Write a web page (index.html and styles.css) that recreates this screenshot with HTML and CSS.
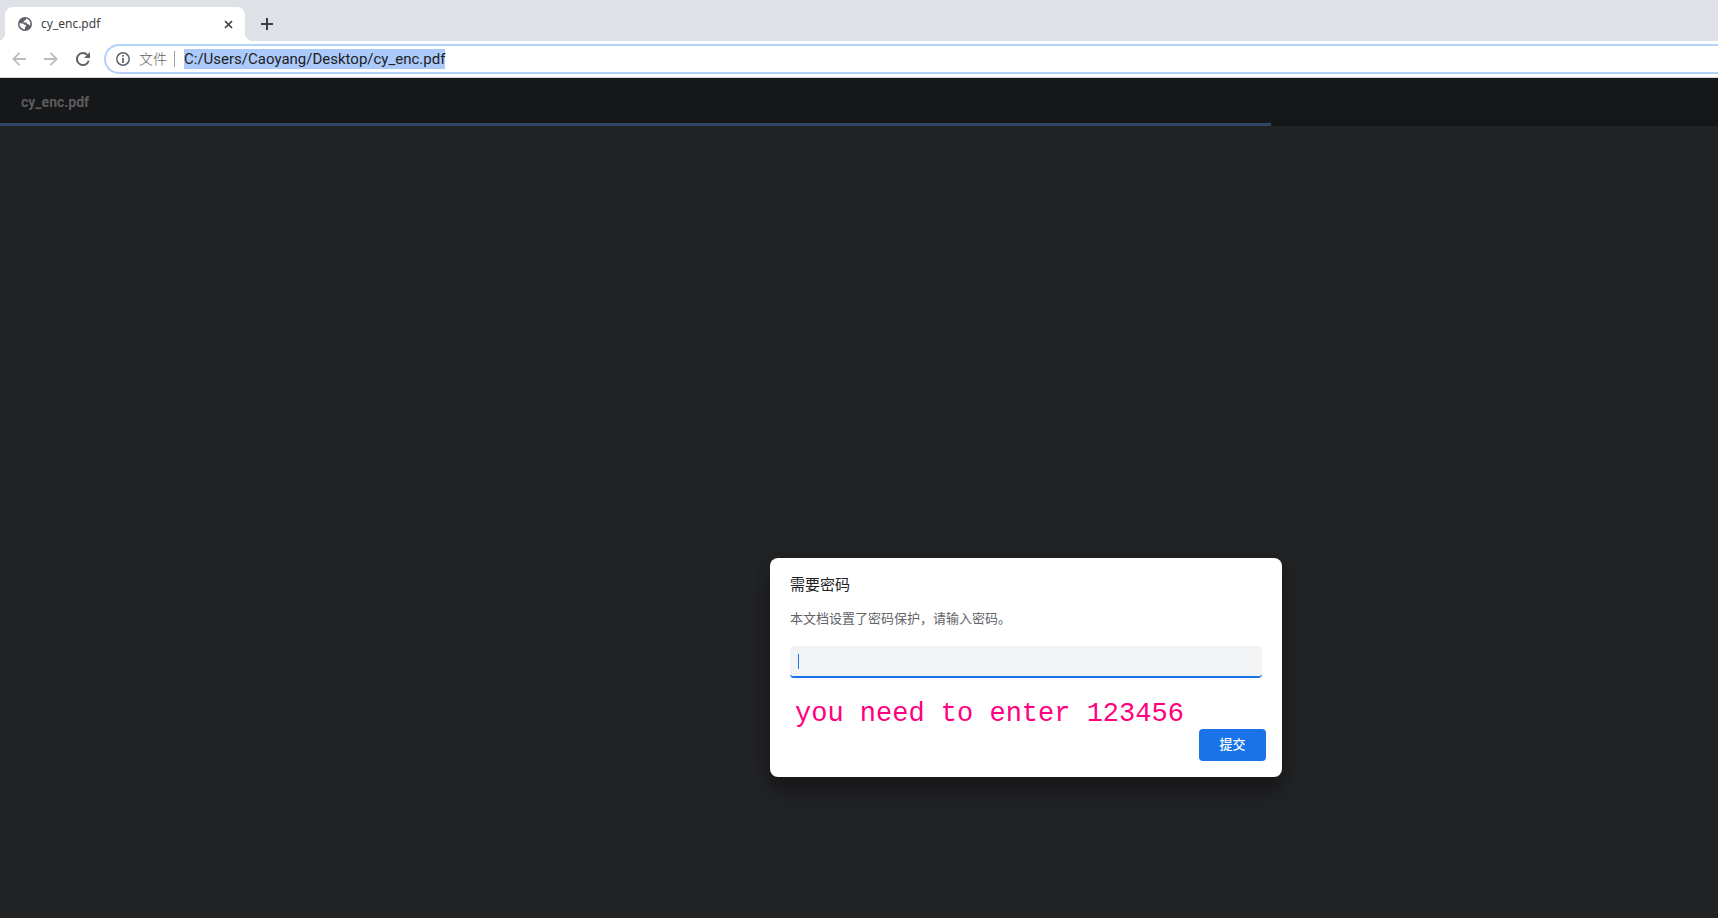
FILE: index.html
```html
<!DOCTYPE html>
<html lang="zh-CN">
<head>
<meta charset="utf-8">
<title>cy_enc.pdf</title>
<link rel="stylesheet" href="styles.css">
</head>
<body>
<div class="tab-strip">
  <div class="tab">
    <svg class="globe" viewBox="0 0 14 14" aria-hidden="true">
      <circle cx="7" cy="7" r="7" fill="#5f6368"/>
      <path d="M1.500 6.200 5 6.600q.9.2 1 1.100h1.300q1 .2.800 1.300-.2.700-1.100.7v2.700q-2.900-.1-4.600-2.300-1.200-1.700-.9-3.900z" fill="#fff"/>
      <path d="M8.200 1.600 7.900 2.500q-.2.700-1.100.7-.2 1.100-1.200 1.200v1h2.500q.9.200.9 1.200v.6h1.300q.8.100 1.100 1h.9q.4-2.300-.6-4.100-1.200-2-3.500-2.500z" fill="#fff"/>
    </svg>
    <span class="tab-title">cy_enc.pdf</span>
    <button class="icon-button" type="button" aria-label="关闭">
      <svg width="9" height="9" viewBox="0 0 9 9"><path d="M1 1l7 7M8 1 1 8" stroke="#3c4043" stroke-width="1.700" fill="none"/></svg>
    </button>
  </div>
  <button class="icon-button new-tab" type="button" aria-label="新标签页">
    <svg width="12" height="12" viewBox="0 0 12 12"><path d="M6 0v12M0 6h12" stroke="#3c4043" stroke-width="2" fill="none"/></svg>
  </button>
</div>
<div class="toolbar">
  <button class="icon-button" type="button" aria-label="后退">
    <svg width="14" height="14" viewBox="0 0 14 14"><path d="M14 7H1.500M7.500.8 1.300 7l6.200 6.200" stroke="#babcbe" stroke-width="1.800" fill="none"/></svg>
  </button>
  <button class="icon-button" type="button" aria-label="前进">
    <svg width="14" height="14" viewBox="0 0 14 14"><path d="M0 7h12.500M6.500.8 12.700 7l-6.200 6.200" stroke="#babcbe" stroke-width="1.800" fill="none"/></svg>
  </button>
  <button class="icon-button" type="button" aria-label="重新加载">
    <svg width="14" height="14" viewBox="0 0 14 14"><path d="M12.700 8.800A6 6 0 1 1 11.300 2.900" stroke="#5f6368" stroke-width="2" fill="none"/><path d="M14 0v6H8z" fill="#5f6368"/></svg>
  </button>
  <div class="omnibox">
    <svg width="14" height="14" viewBox="0 0 14 14" aria-hidden="true"><circle cx="7" cy="7" r="6.200" stroke="#5f6368" stroke-width="1.500" fill="none"/><path d="M7 3v1.700M7 6v5" stroke="#5f6368" stroke-width="1.700" fill="none"/></svg>
    <span class="scheme">文件</span>
    <span class="url"><mark class="selection">C:/Users/Caoyang/Desktop/cy_enc.pdf</mark></span>
  </div>
</div>
<main class="viewer">
  <header class="viewer-header">
    <h1 class="file-name">cy_enc.pdf</h1>
    <div class="progress"></div>
  </header>
  <form class="dialog" role="dialog" aria-labelledby="dialog-title">
    <h2 class="dialog-title" id="dialog-title">需要密码</h2>
    <label class="message" for="password">本文档设置了密码保护，请输入密码。</label>
    <div class="field">
      <input class="password" id="password" type="password">
      <span class="caret"></span>
    </div>
    <p class="note">you need to enter 123456</p>
    <button class="submit" type="button">提交</button>
  </form>
</main>
</body>
</html>
```
FILE: styles.css
```css
* {
  box-sizing: border-box;
}

body {
  margin: 0;
  min-height: 100vh;
  display: flex;
  flex-direction: column;
  background: #212224;
  font-family: "Noto Sans", "Noto Sans CJK SC", sans-serif;
}

h1, h2, p {
  margin: 0;
}

svg {
  display: block;
  flex: none;
}

.icon-button {
  display: flex;
  padding: 0;
  border: 0;
  background: none;
}

.tab-strip {
  display: flex;
  align-items: center;
  height: 41px;
  padding: 7px 5px 0;
  background: #dee1e6;
}

.tab {
  position: relative;
  display: flex;
  align-items: center;
  width: 240px;
  height: 34px;
  padding: 0 12px 0 13px;
  border-radius: 8px 8px 0 0;
  background: #fff;
}

.tab::before,
.tab::after {
  content: "";
  position: absolute;
  bottom: 0;
  width: 8px;
  height: 8px;
}

.tab::before {
  right: 100%;
  background: radial-gradient(circle at 0 0, #dee1e6 8px, #fff 8px);
}

.tab::after {
  left: 100%;
  background: radial-gradient(circle at 100% 0, #dee1e6 8px, #fff 8px);
}

.globe {
  width: 14px;
  height: 14px;
}

.tab-title {
  flex: 1;
  margin-left: 9px;
  color: #3c4043;
  font-size: 12px;
  line-height: 16px;
}

.new-tab {
  margin-left: 16px;
}

.toolbar {
  display: flex;
  align-items: center;
  gap: 18px;
  height: 37px;
  padding-left: 12px;
  border-bottom: 1px solid #d5d7da;
  background: #fff;
}

.omnibox {
  flex: 1;
  display: flex;
  align-items: center;
  height: 30px;
  margin-left: -4px;
  padding-left: 10px;
  border: 2px solid #b3d2fa;
  border-right: 0;
  border-radius: 15px 0 0 15px;
}

.scheme {
  margin: 0 9px;
  padding-right: 7px;
  border-right: 1px solid #9aa0a6;
  color: #5f6368;
  font-size: 14px;
  font-weight: 300;
  line-height: 16px;
}

.url {
  font-family: Roboto, sans-serif;
  font-size: 15px;
  line-height: 20px;
}

.selection {
  display: block;
  background: #accaf9;
  color: #202124;
}

.viewer {
  flex: 1;
}

.viewer-header {
  display: flex;
  flex-direction: column;
  justify-content: space-between;
  height: 48px;
  background: #161719;
}

.file-name {
  padding: 13px 21px 0;
  color: #5c5c5d;
  font: 700 14px/22px Roboto, sans-serif;
}

.progress {
  width: 74%;
  height: 3px;
  background: #304566;
}

.dialog {
  position: absolute;
  top: 558px;
  left: 770px;
  width: 512px;
  display: flex;
  flex-direction: column;
  padding: 16px 16px 16px 20px;
  border-radius: 8px;
  background: #fff;
  box-shadow: 0 0 16px rgba(0, 0, 0, 0.12), 0 16px 16px rgba(0, 0, 0, 0.24);
}

.dialog-title {
  color: #202124;
  font-size: 15px;
  font-weight: 400;
  line-height: 20px;
}

.message {
  margin-top: 14px;
  color: #5f6368;
  font-size: 13px;
  line-height: 20px;
}

.field {
  position: relative;
  margin: 18px 4px 0 0;
}

.password {
  display: block;
  width: 100%;
  height: 32px;
  padding: 6px 8px;
  border: 0;
  border-bottom: 2px solid #1a73e8;
  border-radius: 4px;
  background: #f1f3f4;
  outline: 0;
  caret-color: transparent;
}

.caret {
  position: absolute;
  top: 8px;
  left: 8px;
  width: 1px;
  height: 15px;
  background: #1a73e8;
}

.note {
  margin-top: 21px;
  padding-left: 5px;
  color: #ff0080;
  font: 27px/30px "Liberation Mono", monospace;
}

.submit {
  align-self: flex-end;
  width: 67px;
  height: 32px;
  padding: 0 0 2px;
  border: 0;
  border-radius: 4px;
  background: #1a73e8;
  color: #fff;
  font: 500 13px/20px "Noto Sans CJK SC", sans-serif;
}
```
